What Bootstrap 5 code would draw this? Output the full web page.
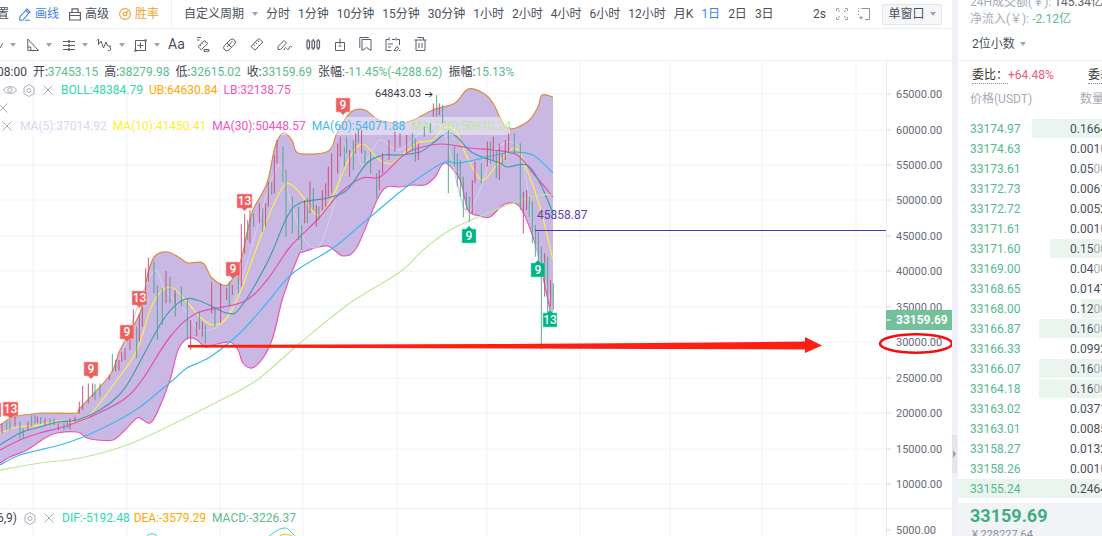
<!DOCTYPE html>
<html lang="zh">
<head>
<meta charset="utf-8">
<title>K线图</title>
<link rel="stylesheet" href="https://cdn.jsdelivr.net/npm/bootstrap@5.3.0/dist/css/bootstrap.min.css">
<style>
html,body{width:1102px;height:536px;overflow:hidden;background:#fff}
body{font-family:Roboto,"Noto Sans CJK SC",sans-serif;font-size:12px;line-height:1.2;color:#4a4f5b}
svg{display:block;flex:none}
.shell{width:1102px;height:536px;overflow:hidden}
.main-col{width:952px;flex:none;overflow:hidden}
.gutter{width:6px;flex:none;background:#f0f1f8;position:relative}
.handle{position:absolute;left:0;top:435px;width:5px;height:38px;background:#e3e5eb;display:flex;align-items:center;justify-content:center}
.handle i{border-left:3px solid #9a9fa8;border-top:4px solid transparent;border-bottom:4px solid transparent}
.side{width:144px;flex:none;overflow:hidden;position:relative}
.bar1{height:29px;border-bottom:1px solid #f0f1f5;white-space:nowrap}
.bar2{height:32px;border-bottom:1px solid #f0f1f5}
.cut{margin-left:-3px}
.g10{gap:10px}.g4{gap:4px}.g7{gap:7px}.g11{gap:11px}.g13{gap:13px}.ml2{margin-left:2px}.mr2{margin-right:2px}
.nudge-a{margin-left:-9px}.nudge-b{margin-left:-3px}.nudge-c{margin-left:-2px}.nudge-d{margin-left:-3px}
.vr-line{width:1px;height:29px;margin:0 12px;background:#f0f1f5}
.blue{color:#3d82ee}.orange{color:#f5a030}
.tri{width:0;height:0;border-top:4px solid #a0a4ae;border-left:3px solid transparent;border-right:3px solid transparent;flex:none}
.win-btn{width:60px;height:21px;margin:0 10px 0 2px;padding:0;font-size:12px;line-height:1;color:#4a4f5b;background:#f5f6f8;border:1px solid #e3e5ea;border-radius:2px;gap:5px}
.ico{fill:none;stroke:#5a5f6b;stroke-width:1}
.aa{font-size:14px;color:#4a4f5c;width:15px}
.canvas{height:447px;position:relative;overflow:hidden}
.layer{position:absolute;left:0;top:0;width:952px;height:447px}
.top-layer{z-index:2;overflow:visible;pointer-events:none}
.legend{position:relative;z-index:1;padding-top:2px;white-space:nowrap}
.lrow{height:18px;display:flex;align-items:center;gap:6px}
.lrow.wash{width:510px;background:rgba(255,255,255,.42)}
.lrow svg{fill:none;stroke:#a9adb8;stroke-width:1}
.eye{padding-left:3px}.ind{padding-left:2px}
.c-g{color:#5dbb8d}.c-dark{color:#3d414c}.c-t{color:#2ed8b0}.c-o{color:#ffa800}.c-p{color:#f055c0}
.c-l{color:#d6d8f0}.c-y{color:#ffee33}.c-b{color:#3fb8ee}.c-n{color:#bce896}
.macd{height:28px;border-top:1px solid #eceef3;position:relative;overflow:hidden;white-space:nowrap}
.macd .layer{height:28px}
.macd .lrow{position:relative;z-index:1;margin-left:-3px}
.macd .lrow svg.hx{margin-left:1px}
.ax{font-size:11px;fill:#666b78}
.ax-dark{fill:#3d414c}
.mk{font-size:12px;font-weight:500;fill:#fff;text-anchor:middle}
.stats{margin-top:-6px;padding-left:12px}
.stats div{height:17px;line-height:17px;white-space:nowrap;color:#a6abb8}
.stats b{font-weight:400;color:#5b606c}
.dec{height:33px;padding-left:14px;border-bottom:1px solid #f0f1f5;gap:5px;font-size:12px;color:#4a4f5b}
.wei{padding:7px 0 0 14px;height:31px;white-space:nowrap}
.wei .u{border-bottom:1px dotted #8a8f9a;padding-bottom:1px;color:#333;display:inline-block;flex:none}
.wei .pos{color:#ee5a78;flex:none;width:50px}
.wei .w2{margin-left:30px}
.heads{height:27px;padding-left:12px;color:#a6abb8;white-space:nowrap}
.heads span:first-child{width:110px;flex:none}
.depth{height:20px;padding-left:12px;position:relative;white-space:nowrap;overflow:hidden}
.depth .fillb{position:absolute;right:0;top:0;height:19px;background:#eaf5ef}
.depth .pr{position:relative;width:100px;color:#55b98c;flex:none;font-size:12px}
.depth .am{position:relative;color:#4a4f5b}
.depth .am em{font-style:normal;color:#a9adb6}
.foot{margin-top:4px;height:40px;background:#f1f3f6;padding:3px 0 0 12px}
.bigp{font-size:18px;font-weight:700;color:#3fae7f;line-height:20px}
.sub{color:#8a8f9a;font-size:11px;line-height:14px;padding:2px 0 0 2px}
</style>
</head>
<body>
<div class="shell d-flex">
  <div class="main-col d-flex flex-column">
    <div class="bar1 d-flex align-items-center">
      <div class="d-flex align-items-center g10 cut">
        <span>置</span>
        <div class="d-flex align-items-center g4 blue">
          <svg width="12" height="14" viewBox="0 0 12 14" fill="none" stroke="#3d82ee" stroke-width="1.100"><path d="M.8 13.300V10L8 2l3 2.800-7.200 8.500zM6.800 3.500l3 2.800M6 13.300h5"/></svg><span>画线</span>
        </div>
        <div class="d-flex align-items-center g4">
          <svg class="ico" width="12" height="14" viewBox="0 0 12 14"><path d="M.6 5.500h10.800v7.500H.6zM3 5.500V1.800h6v3.700M.6 8.500h10.800" stroke-width="1.200"/></svg><span>高级</span>
        </div>
        <div class="d-flex align-items-center g4 orange">
          <svg width="12" height="14" viewBox="0 0 12 14" fill="none" stroke="#f5a030" stroke-width="1.100"><circle cx="6" cy="7" r="5.400"/><circle cx="6" cy="7" r="1.800"/><path d="M7.300 5.700L9 4"/></svg><span>胜率</span>
        </div>
      </div>
      <span class="vr-line"></span>
      <div class="d-flex align-items-center gap-2">
        <span>自定义周期</span><span class="tri"></span>
        <span>分时</span><span>1分钟</span><span>10分钟</span><span>15分钟</span><span>30分钟</span><span>1小时</span><span>2小时</span><span>4小时</span><span>6小时</span><span>12小时</span><span>月K</span><span class="blue">1日</span><span>2日</span><span>3日</span>
      </div>
      <div class="ms-auto d-flex align-items-center g10">
        <span>2s</span>
        <svg width="12" height="12" viewBox="0 0 12 12" fill="none" stroke="#a0a4ae"><path d="M.5 3V.5H3M9 .5h2.500V3M11.500 9v2.500H9M3 11.500H.5V9M2 2l2 2M10 2L8 4M10 10L8 8M2 10l2-2"/></svg>
        <svg width="12" height="12" viewBox="0 0 12 12" fill="none" stroke="#8e93a0"><path d="M.5 .5h1M3.500 .5h8v11H7M.5 3v1M.5 6v1"/><path d="M3 8v3.500M1.200 9.700h3.600"/></svg>
        <button type="button" class="btn win-btn d-flex align-items-center justify-content-center">单窗口<span class="tri"></span></button>
      </div>
    </div>
    <div class="bar2 d-flex align-items-center g11">
      <div class="d-flex align-items-center g7 nudge-a">
        <svg class="ico" width="12" height="14" viewBox="0 0 12 14"><path d="M9 10l3-5"/></svg><span class="tri"></span>
      </div>
      <div class="d-flex align-items-center g7">
        <svg class="ico" width="12" height="14" viewBox="0 0 12 14"><path d="M.8 1v11.500h10.700zM.8 9h3v3.500"/></svg><span class="tri"></span>
      </div>
      <div class="d-flex align-items-center g7">
        <svg class="ico" width="12" height="14" viewBox="0 0 12 14"><path d="M0 3.500h12M0 7.500h12M0 11.500h12" stroke="#5a5f6b"/><path d="M6 2v3M6 6v3M6 10v3" stroke-width="1.500"/></svg><span class="tri"></span>
      </div>
      <div class="d-flex align-items-center g7 nudge-b">
        <svg class="ico" width="16" height="14" viewBox="0 0 16 14"><path d="M1 2.500L2.500 1v5M2 7l3-4 2.500 7L10 4l1.500 4"/><path d="M12 8h3l-1.500 1.700c2 0 1.500 3-.3 3-.6 0-1-.3-1.200-.7"/></svg><span class="tri"></span>
      </div>
      <div class="d-flex align-items-center g7 nudge-c">
        <svg class="ico" width="13" height="14" viewBox="0 0 13 14"><path d="M1.500 2.500h10v10h-10zM6.500 4.500v6M3.500 7.500h6"/><circle cx="1.500" cy="12.500" r="1"/><circle cx="11.500" cy="2.500" r="1"/></svg><span class="tri"></span>
      </div>
      <div class="d-flex align-items-center g13 nudge-d">
        <span class="aa">Aa</span>
        <svg class="ico" width="14" height="16" viewBox="0 0 14 16"><path d="M1 1.500h4M1 4h2.500M8 13.500h5v1.800H8z"/><path d="M2 10.500L8.500 4.500l3.300 3-6.500 6.200zM4 9l1 1M6 7.300l1 1M8 5.500l1 1"/></svg>
        <svg class="ico" width="14" height="16" viewBox="0 0 14 16"><path d="M1.500 9.500l5.500-5.500a3 3 0 0 1 4.500 4.300L6 13.800a3 3 0 0 1-4.500-4.300zM4 7l5 4.800M9.500 5L4 11"/></svg>
        <svg class="ico" width="14" height="16" viewBox="0 0 14 16"><path d="M1 10.500l7.800-8 4 3.500-7.800 8.200zM3.500 8.500l1.500 1.300M5.500 6.500l1.500 1.300M7.500 4.500L9 5.800"/></svg>
        <svg class="ico" width="16" height="16" viewBox="0 0 16 16"><path d="M1 13.500v-3L7 4.500 9.500 7l-6 6.500zM7 14c1-4 2.500-2 3.200-1s1.500 1 2-1 1.500-2 2.800-1"/></svg>
        <svg class="ico" width="15" height="16" viewBox="0 0 15 16"><path d="M1 5h2.500v7H1zM6 5h2.500v7H6zM11 5h2.500v7H11zM2.200 3v2M2.200 12v2M7.200 3v2M7.200 12v2M12.200 3v2M12.200 12v2" stroke-width="1.200"/></svg>
        <svg class="ico" width="12" height="16" viewBox="0 0 12 16"><path d="M1.500 6.500h9v8h-9zM6 2.500v6M4.500 10h3"/></svg>
        <svg class="ico" width="13" height="16" viewBox="0 0 13 16"><path d="M3 3.500h9v11l-4.500-3-4.500 3zM.8 12V1.500h9"/></svg>
        <svg class="ico" width="16" height="16" viewBox="0 0 16 16"><path d="M1 3.500v11h5.500M1 3.500h3M7 3.500h3M12 3.500h2.500V9M4 1.500v3M11 1.500v3M3 8h5M3 11h3M9 14.500l3-4 1.500 2-2 2.500zM14 14.500h1.500"/></svg>
        <svg class="ico" width="13" height="16" viewBox="0 0 13 16"><path d="M.5 4h12M3.500 1.500h6V4M2 4v10.500h9V4M5 7v5M8 7v5"/></svg>
      </div>
    </div>
    <div class="canvas">
      <svg class="layer" viewBox="0 61 952 447">
        <g stroke="#f0f3fa">
          <path d="M33 61V508M127 61V508M220 61V508M303 61V508M397 61V508M487 61V508M580 61V508M670 61V508M762 61V508M856 61V508"/>
          <path d="M0 94H886M0 130H886M0 165H886M0 200H886M0 236H886M0 271H886M0 307H886M0 342H886M0 378H886M0 413H886M0 449H886M0 484H886"/>
        </g>
        <path id="bandfill" fill="#c9b8e4" d="M0 425L13 417 33 414 43 413 77 413 80 408 110 375 120 350 133 327 142 307 148 273 155 256 168 252 180 258 188 263 203 263 212 278 227 285 240 263 247 233 253 210 267 183 275 147 283 133 292 140 298 153 323 153 332 147 337 133 351 112 365 110 379 120 400 123 413 120 433 110 455 103 468 89 483 93 493 103 507 128 527 122 538 107 542 95 553 97V313L550 310 543 277 535 243 520 207 505 204 490 217 480 216 468 210 460 180 445 163 435 177 425 185 413 185 400 187 387 187 377 200 357 247 343 256 327 246 303 252 298 257 283 297 273 337 263 358 252 368 243 363 238 350 230 342 213 345 205 347 197 340 188 338 178 350 170 380 157 413 150 423 143 420 137 418 125 430 113 440 97 440 87 438 77 432 57 433 45 438 27 450 10 457 0 463Z"/>
        <g fill="none" stroke-width="1.200" stroke-linejoin="round">
          <path id="ub" class="sm" stroke="#d98c40" d="M0 425L13 417 33 414 43 413 77 413 80 408 110 375 120 350 133 327 142 307 148 273 155 256 168 252 180 258 188 263 203 263 212 278 227 285 240 263 247 233 253 210 267 183 275 147 283 133 292 140 298 153 323 153 332 147 337 133 351 112 365 110 379 120 400 123 413 120 433 110 455 103 468 89 483 93 493 103 507 128 527 122 538 107 542 95 553 97"/>
          <path id="lb" class="sm" stroke="#e858b8" d="M550 310L543 277 535 243 520 207 505 204 490 217 480 216 468 210 460 180 445 163 435 177 425 185 413 185 400 187 387 187 377 200 357 247 343 256 327 246 303 252 298 257 283 297 273 337 263 358 252 368 243 363 238 350 230 342 213 345 205 347 197 340 188 338 178 350 170 380 157 413 150 423 143 420 137 418 125 430 113 440 97 440 87 438 77 432 57 433 45 438 27 450 10 457 0 463"/>
          <path class="sm" stroke="#d2cdea" d="M120 360L140 300 155 270 165 290 185 310 200 330 225 320 245 270 265 200 280 165 290 200 305 240 320 245 335 200 350 130 362 165 380 140 400 150 430 125 445 135 465 210 480 190 495 150 520 150 535 240 553 310"/>
          <path class="sm" stroke="#ffee44" d="M0 433L17 427 33 426 58 421 77 422 90 415 117 380 137 350 153 303 170 287 187 302 200 317 213 325 227 318 240 293 267 220 283 187 292 185 303 197 317 215 330 202 350 157 363 144 377 158 390 164 400 157 417 143 433 140 445 127 457 133 467 157 482 180 497 165 515 148 527 170 540 207 553 260"/>
          <path class="sm" stroke="#e84db5" d="M0 450L20 440 40 433 63 427 90 417 123 400 142 380 170 337 197 313 243 302 267 280 290 247 317 220 340 193 362 178 380 177 400 158 413 150 440 144 470 148 493 150 517 155 533 173 553 197"/>
          <path class="sm" stroke="#3e9eaa" d="M0 445L20 433 40 427 58 422 77 420 100 410 117 397 130 380 163 320 183 300 200 301 227 313 240 308 267 263 287 217 300 203 327 198 347 190 367 163 383 155 400 155 420 152 433 143 447 133 457 137 473 153 500 163 507 167 527 165 540 183 553 213"/>
          <path class="sm" stroke="#3fb8ee" d="M0 465L20 455 60 445 83 437 113 423 140 407 173 380 187 368 210 357 240 333 267 303 293 273 333 248 363 223 400 192 420 177 445 162 460 163 500 154 513 152 533 155 553 173"/>
          <path class="sm" stroke="#bce896" d="M0 470L40 463 80 458 127 445 167 427 217 402 257 380 300 343 350 303 400 272 423 250 450 230 483 215 513 203 540 195 553 195"/>
        </g>
      </svg>
      <div class="legend">
        <div class="lrow"><span class="c-dark nudge-d">08:00</span><span class="c-dark">开:<span class="c-g">37453.15</span></span><span class="c-dark">高:<span class="c-g">38279.98</span></span><span class="c-dark">低:<span class="c-g">32615.02</span></span><span class="c-dark">收:<span class="c-g">33159.69</span></span><span class="c-dark">张幅:<span class="c-g">-11.45%(-4288.62)</span></span><span class="c-dark">振幅:<span class="c-g">15.13%</span></span></div>
        <div class="lrow eye">
          <svg width="14" height="12" viewBox="0 0 14 12"><path d="M.5 6C3 1.500 11 1.500 13.500 6 11 10.500 3 10.500 .5 6z"/><circle cx="7" cy="6" r="2.200"/></svg>
          <svg width="12" height="13" viewBox="0 0 12 13"><path d="M6 .5l5 3v6l-5 3-5-3v-6z"/><circle cx="6" cy="6.500" r="2"/></svg>
          <svg class="ml2" width="10" height="10" viewBox="0 0 10 10"><path d="M.5.5l9 9M9.500.5l-9 9"/></svg>
          <span class="c-t ml2">BOLL:48384.79</span><span class="c-o">UB:64630.84</span><span class="c-p">LB:32138.75</span>
        </div>
        <div class="lrow"><svg width="8" height="10" viewBox="0 0 8 10"><path d="M-1.500.5l9 9M7.500.5l-9 9"/></svg></div>
        <div class="lrow wash ind">
          <svg class="mr2" width="10" height="10" viewBox="0 0 10 10"><path d="M.5.5l9 9M9.500.5l-9 9"/></svg>
          <span class="c-l">MA(5):37014.92</span><span class="c-y">MA(10):41450.41</span><span class="c-p">MA(30):50448.57</span><span class="c-b">MA(60):54071.88</span><span class="c-n">MA(120):50910.24</span>
        </div>
      </div>
      <svg class="layer top-layer" viewBox="0 61 952 447">
        <g stroke-width="2.700" fill="none">
          <g transform="translate(0 380) scale(.3333)">
            <path stroke="#c9446e" d="M6 130V160M45 110V140M84 125V150M112 110V130M135 115V135M175 130V150M210 115V148M225 110V125M238 65V100M248 18V90M265 10V70M278 10V50"/>
            <path stroke="#46a084" d="M20 125V150M30 122V150M60 125V178M70 145V175M95 105V140M105 105V130M122 112V132M150 115V135M162 115V135M192 130V150M202 122V145M285 12V60M300 10V50"/>
          </g>
          <g transform="translate(100 130) scale(.3333)">
            <path stroke="#c9446e" d="M28 735V750M47 690V725M57 690V722M65 665V695M75 655V690M90 625V660M100 538V610M118 555V635M127 530V590M137 415V520M145 383V455M198 423V520M225 480V520M272 570V660M290 575V618M307 575V620M335 457V550M362 460V580M380 473V510M397 465V495M424 282V470M434 252V370M450 240V340M478 220V280M497 220V290M505 155V230M523 75V190M531 30V100M614 210V280M630 155V250M649 225V290M667 180V240M677 160V230M685 110V200M695 70V190M713 40V130M721 20V80M749 60V140M767 10V70M785 0V70M838 120V180M848 70V130M867 30V90M885 5V65"/>
            <path stroke="#46a084" d="M37 672V725M110 590V685M162 395V490M172 465V630M187 475V585M210 440V520M226 490V560M244 470V530M262 505V630M298 545V600M316 585V640M345 530V590M388 455V530M415 435V490M443 270V330M461 250V290M488 235V305M515 155V195M549 50V155M558 120V320M577 200V310M596 230V330M605 285V360M622 205V280M640 175V240M657 230V270M733 50V110M740 20V70M760 30V120M775 0V40M795 60V100M812 65V130M830 130V205"/>
          </g>
          <g transform="translate(400 80) scale(.3333)">
            <path stroke="#c9446e" d="M0 160V200M20 165V220M55 190V240M100 70V110M118 70V105M217 300V400M225 245V310M262 185V260M280 170V240M298 190V300M316 180V240M326 160V220M370 335V460M380 330V390M434 520V650M452 600V680"/>
            <path stroke="#46a084" d="M37 160V210M46 175V245M73 140V170M91 130V160M110 45V110M128 75V130M145 150V340M163 200V260M172 220V320M181 240V350M190 290V412M199 335V390M208 350V425M244 250V310M271 185V250M289 210V295M307 220V250M343 160V220M361 190V390M388 350V410M397 365V490M406 435V530M415 455V560M424 500V808M443 530V700M460 610V690"/>
          </g>
        </g>
        <path fill="#ff1f12" d="M188 345L500 344 650 343 805 341.500V337L822 345.500 805 353V349.500L650 349 500 348.500 188 347.500Z"/>
        <path stroke="#5b2bb5" d="M535 230.500H886"/>
        <text x="537" y="219" font-size="12" fill="#5b3fb0">45858.87</text>
        <text x="375" y="97" class="ax ax-dark">64843.03</text>
        <path d="M425 94.500h7M429.500 92l2.500 2.500-2.500 2.500" fill="none" stroke="#222"/>
        <g fill="#ee6060" stroke="#f8b8b8" stroke-width=".6">
          <path d="M336 98h14v14h-4l-3 3-3-3h-4z"/>
          <path d="M237 194h15v14h-4.500l-3 3-3-3H237z"/>
          <path d="M226 262h14v14h-4l-3 3-3-3h-4z"/>
          <path d="M132 291h15v14h-4.500l-3 3-3-3H132z"/>
          <path d="M120 325h14v14h-4l-3 3-3-3h-4z"/>
          <path d="M84 362h14v14h-4l-3 3-3-3h-4z"/>
          <path d="M3 402h15v14h-4.500l-3 3-3-3H3z"/>
          <path d="M-8 403h9v14h-9z"/>
        </g>
        <g fill="#00b585" stroke="#7fdcc0" stroke-width=".6">
          <path d="M462 229h4l3-3 3 3h4v14h-14z"/>
          <path d="M531 263h4l3-3 3 3h4v14h-14z"/>
          <path d="M543 313h4l3-3 3 3h4v14h-14z"/>
        </g>
        <text class="mk" x="343" y="109">9</text><text class="mk" x="244.500" y="205">13</text><text class="mk" x="233" y="273">9</text><text class="mk" x="139.500" y="302">13</text><text class="mk" x="127" y="336">9</text><text class="mk" x="91" y="373">9</text><text class="mk" x="10.500" y="413">13</text>
        <text class="mk" x="469" y="240">9</text><text class="mk" x="538" y="274">9</text><text class="mk" x="550" y="324">13</text>
        <path stroke="#e8eaf0" d="M886.500 61V508"/>
        <g stroke="#d8dbe2"><path d="M886 94h5M886 130h5M886 165h5M886 200h5M886 236h5M886 271h5M886 307h5M886 342h5M886 378h5M886 413h5M886 449h5M886 484h5"/></g>
        <g class="ax"><text x="896" y="98">65000.00</text><text x="896" y="134">60000.00</text><text x="896" y="169">55000.00</text><text x="896" y="204">50000.00</text><text x="896" y="240">45000.00</text><text x="896" y="275">40000.00</text><text x="896" y="311">35000.00</text><text x="896" y="346">30000.00</text><text x="896" y="382">25000.00</text><text x="896" y="417">20000.00</text><text x="896" y="453">15000.00</text><text x="896" y="488">10000.00</text></g>
        <rect x="886" y="310" width="66" height="20" fill="#74c098"/>
        <text x="896" y="324" font-size="12" font-weight="700" fill="#fff">33159.69</text>
        <path stroke="#fff" d="M886 320h5"/>
        <ellipse cx="916" cy="343.500" rx="36" ry="9.300" fill="none" stroke="#f01010" stroke-width="2.600"/>
      </svg>
    </div>
    <div class="macd">
      <svg class="layer" viewBox="0 508 952 28">
        <path stroke="#f0f3fa" d="M33 508V536M127 508V536M220 508V536M303 508V536M397 508V536M487 508V536M580 508V536M670 508V536M762 508V536M856 508V536"/>
        <path fill="none" stroke="#2ed8b0" d="M146 536Q152 529 158 536M268 536C276 530 280 527 285 527 289 527 291 532 296 536"/>
        <path fill="none" stroke="#ffb000" d="M278 536Q286 530 293 536"/>
        <path stroke="#e8eaf0" d="M886.500 508V536"/>
        <path stroke="#d8dbe2" d="M886 529h5"/>
        <text class="ax" x="896" y="533">5000.00</text>
      </svg>
      <div class="lrow">
        <span class="c-dark">6,9)</span>
        <svg class="hx" width="12" height="13" viewBox="0 0 12 13"><path d="M6 .5l5 3v6l-5 3-5-3v-6z"/><circle cx="6" cy="6.500" r="2"/></svg>
        <svg class="ml2" width="10" height="10" viewBox="0 0 10 10"><path d="M.5.5l9 9M9.500.5l-9 9"/></svg>
        <span class="c-t ml2">DIF:-5192.48</span><span class="c-o nudge-c">DEA:-3579.29</span><span class="c-g">MACD:-3226.37</span>
      </div>
    </div>
  </div>
  <div class="gutter"><div class="handle"><i></i></div></div>
  <aside class="side">
    <div class="stats">
      <div>24H成交额(￥): <b>145.34亿</b></div>
      <div>净流入(￥): <span class="c-g">-2.12亿</span></div>
    </div>
    <div class="dec d-flex align-items-center"><span>2位小数</span><span class="tri"></span></div>
    <div class="wei d-flex align-items-start"><span class="u">委比：</span><span class="pos">+64.48%</span><span class="u w2">委差</span></div>
    <div class="heads d-flex"><span>价格(USDT)</span><span>数量</span></div>
    <div class="depth d-flex align-items-center"><div class="fillb" style="width:70px"></div><span class="pr">33174.97</span><span class="am">0.1664</span></div>
    <div class="depth d-flex align-items-center"><span class="pr">33174.63</span><span class="am">0.001<em>0</em></span></div>
    <div class="depth d-flex align-items-center"><span class="pr">33173.61</span><span class="am">0.05<em>00</em></span></div>
    <div class="depth d-flex align-items-center"><span class="pr">33172.73</span><span class="am">0.0061</span></div>
    <div class="depth d-flex align-items-center"><span class="pr">33172.72</span><span class="am">0.0052</span></div>
    <div class="depth d-flex align-items-center"><span class="pr">33171.61</span><span class="am">0.001<em>0</em></span></div>
    <div class="depth d-flex align-items-center"><div class="fillb" style="width:52px"></div><span class="pr">33171.60</span><span class="am">0.15<em>00</em></span></div>
    <div class="depth d-flex align-items-center"><span class="pr">33169.00</span><span class="am">0.04<em>00</em></span></div>
    <div class="depth d-flex align-items-center"><span class="pr">33168.65</span><span class="am">0.0147</span></div>
    <div class="depth d-flex align-items-center"><div class="fillb" style="width:21px"></div><span class="pr">33168.00</span><span class="am">0.12<em>00</em></span></div>
    <div class="depth d-flex align-items-center"><div class="fillb" style="width:63px"></div><span class="pr">33166.87</span><span class="am">0.16<em>00</em></span></div>
    <div class="depth d-flex align-items-center"><span class="pr">33166.33</span><span class="am">0.0992</span></div>
    <div class="depth d-flex align-items-center"><div class="fillb" style="width:63px"></div><span class="pr">33166.07</span><span class="am">0.16<em>00</em></span></div>
    <div class="depth d-flex align-items-center"><div class="fillb" style="width:63px"></div><span class="pr">33164.18</span><span class="am">0.16<em>00</em></span></div>
    <div class="depth d-flex align-items-center"><span class="pr">33163.02</span><span class="am">0.0371</span></div>
    <div class="depth d-flex align-items-center"><span class="pr">33163.01</span><span class="am">0.0085</span></div>
    <div class="depth d-flex align-items-center"><span class="pr">33158.27</span><span class="am">0.0132</span></div>
    <div class="depth d-flex align-items-center"><span class="pr">33158.26</span><span class="am">0.001<em>0</em></span></div>
    <div class="depth d-flex align-items-center"><div class="fillb" style="width:144px"></div><span class="pr">33155.24</span><span class="am">0.2464</span></div>
    <div class="foot">
      <div class="bigp">33159.69</div>
      <div class="sub">¥ 228227.64</div>
    </div>
  </aside>
</div>
<script src="https://cdn.jsdelivr.net/npm/bootstrap@5.3.0/dist/js/bootstrap.bundle.min.js"></script>
<script>
/* Catmull-Rom smoothing of the sampled indicator series */
function pts(d){var n=d.match(/-?[\d.]+/g).map(Number),o=[];for(var i=0;i<n.length;i+=2)o.push([n[i],n[i+1]]);return o}
function curve(p){var s='';for(var i=0;i<p.length-1;i++){var a=p[i-1]||p[i],b=p[i],c=p[i+1],e=p[i+2]||c,k=.16;
s+='C'+(b[0]+(c[0]-a[0])*k)+' '+(b[1]+(c[1]-a[1])*k)+' '+(c[0]-(e[0]-b[0])*k)+' '+(c[1]-(e[1]-b[1])*k)+' '+c[0]+' '+c[1]}return s}
var ub=pts(document.getElementById('ub').getAttribute('d')),lb=pts(document.getElementById('lb').getAttribute('d'));
document.querySelectorAll('path.sm').forEach(function(el){var p=pts(el.getAttribute('d'));el.setAttribute('d','M'+p[0][0]+' '+p[0][1]+curve(p))});
document.getElementById('bandfill').setAttribute('d','M'+ub[0][0]+' '+ub[0][1]+curve(ub)+'L553 313L'+lb[0][0]+' '+lb[0][1]+curve(lb)+'Z');
</script>
</body>
</html>
